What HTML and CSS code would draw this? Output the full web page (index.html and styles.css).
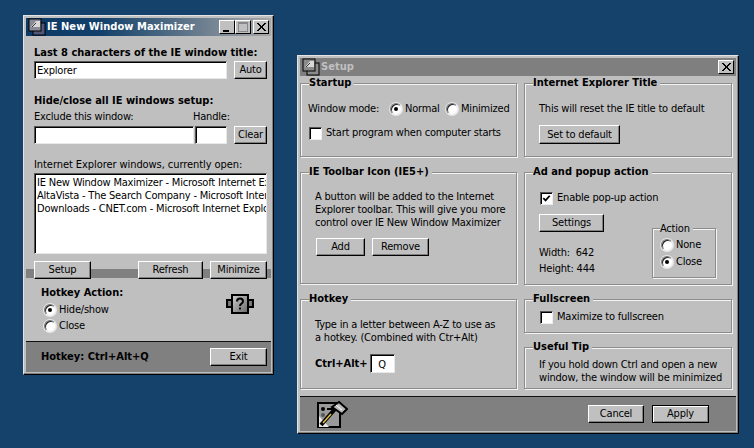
FILE: index.html
```html
<!DOCTYPE html>
<html lang="en">
<head>
<meta charset="utf-8">
<title>IE New Window Maximizer</title>
<link rel="stylesheet" href="styles.css">
</head>
<body>
<section class="win main">
  <header class="title active">
    <svg class="appicon" viewBox="0 0 18 18"><rect x="5" y="5" width="12" height="12" fill="#50587a" stroke="#000"/><rect x="1" y="1" width="12" height="12" fill="#8a8a96" stroke="#000"/><path d="M3 9 8 3h4v6z" fill="#d8d8d8"/><path d="M4 9l4-4" stroke="#333"/></svg>
    <span class="title-text">IE New Window Maximizer</span>
    <span class="ctl"><svg viewBox="0 0 16 14"><rect x="4" y="10" width="6" height="2" fill="#000"/></svg></span>
    <span class="ctl"><svg viewBox="0 0 16 14"><rect x="3.500" y="2.500" width="9" height="9" fill="none" stroke="#888"/><rect x="3" y="2" width="10" height="2" fill="#888"/></svg></span>
    <span class="ctl gap"><svg viewBox="0 0 16 14"><path d="M4 3l8 8M12 3l-8 8M5 3l8 8M13 3l-8 8" stroke="#000" fill="none"/></svg></span>
  </header>
  <div class="main-body">
    <div class="t b l1">Last 8 characters of the IE window title:</div>
    <div class="row r1"><div class="field f-wide">Explorer</div><button class="btn b-side">Auto</button></div>
    <div class="t b l2">Hide/close all IE windows setup:</div>
    <div class="row-labels"><span class="t">Exclude this window:</span><span class="t">Handle:</span></div>
    <div class="row r2"><div class="field f-exclude"></div><div class="field f-handle"></div><button class="btn b-side">Clear</button></div>
    <div class="t l3">Internet Explorer windows, currently open:</div>
    <div class="field list">
      <div>IE New Window Maximizer - Microsoft Internet Explorer</div>
      <div>AltaVista - The Search Company - Microsoft Internet Explorer</div>
      <div>Downloads - CNET.com - Microsoft Internet Explorer</div>
    </div>
  </div>
  <div class="strip">
    <button class="btn b-setup">Setup</button>
    <button class="btn b-refresh">Refresh</button>
    <button class="btn b-min">Minimize</button>
  </div>
  <div class="action">
    <div class="action-left">
      <div class="t b">Hotkey Action:</div>
      <div class="opt o1"><span class="radio on"></span><span class="t">Hide/show</span></div>
      <div class="opt"><span class="radio"></span><span class="t">Close</span></div>
    </div>
    <svg class="chip" viewBox="0 0 28 20"><rect x="1" y="6" width="6" height="7" fill="#777" stroke="#000" stroke-width="2"/><rect x="21" y="6" width="6" height="7" fill="#777" stroke="#000" stroke-width="2"/><defs><linearGradient id="cg" x1="0" y1="0" x2="1" y2="1"><stop offset="0" stop-color="#d0d0d0"/><stop offset="1" stop-color="#666"/></linearGradient></defs><rect x="6" y="1" width="16" height="18" fill="url(#cg)" stroke="#000" stroke-width="2"/><path d="M11 7.500c0-4 6-4 6 0 0 2-3 2-3 4.500" fill="none" stroke="#000" stroke-width="2"/><rect x="13" y="13.500" width="2" height="2" fill="#000"/></svg>
  </div>
  <footer class="foot main-foot">
    <span class="t b">Hotkey: Ctrl+Alt+Q</span>
    <button class="btn b-exit">Exit</button>
  </footer>
</section>

<section class="win setup">
  <header class="title inactive">
    <svg class="appicon" viewBox="0 0 18 18"><rect x="5" y="5" width="12" height="12" fill="#8a8a8a" stroke="#000"/><rect x="1" y="1" width="12" height="12" fill="#8a8a8a" stroke="#000"/><path d="M3 9 8 3h4v6z" fill="#d8d8d8"/><path d="M4 9l4-4" stroke="#333"/></svg>
    <span class="title-text dim">Setup</span>
    <span class="ctl gap"><svg viewBox="0 0 16 14"><path d="M4 3l8 8M12 3l-8 8M5 3l8 8M13 3l-8 8" stroke="#000" fill="none"/></svg></span>
  </header>
  <div class="groups">
    <div class="col">
      <div class="group g-startup">
        <div class="legend t b">Startup</div>
        <div class="mode"><span class="t mode-label">Window mode:</span><span class="radio on"></span><span class="t mode-a">Normal</span><span class="radio"></span><span class="t mode-b">Minimized</span></div>
        <div class="check-row c-start"><span class="check"></span><span class="t">Start program when computer starts</span></div>
      </div>
      <div class="group g-toolbar">
        <div class="legend t b">IE Toolbar Icon (IE5+)</div>
        <p class="t para">A button will be added to the Internet<br>Explorer toolbar. This will give you more<br>control over IE New Window Maximizer</p>
        <div class="btns"><button class="btn b-add">Add</button><button class="btn b-remove">Remove</button></div>
      </div>
      <div class="group g-hotkey">
        <div class="legend t b">Hotkey</div>
        <p class="t para">Type in a letter between A-Z to use as<br>a hotkey. (Combined with Ctr+Alt)</p>
        <div class="combo"><span class="t b">Ctrl+Alt+</span><div class="field f-key">Q</div></div>
      </div>
    </div>
    <div class="col">
      <div class="group g-title">
        <div class="legend t b">Internet Explorer Title</div>
        <p class="t para-r">This will reset the IE title to default</p>
        <button class="btn b-default">Set to default</button>
      </div>
      <div class="group g-ad">
        <div class="legend t b">Ad and popup action</div>
        <div class="check-row c-ad"><span class="check"><svg viewBox="0 0 12 12"><path d="M2.500 5.500 5 8l4.500-5" fill="none" stroke="#000" stroke-width="2"/></svg></span><span class="t">Enable pop-up action</span></div>
        <div class="ad-lower">
          <div class="ad-left">
            <button class="btn b-settings">Settings</button>
            <div class="t dim-line d1">Width:&nbsp; 642</div>
            <div class="t dim-line">Height: 444</div>
          </div>
          <div class="group mini">
            <div class="legend mini-legend t">Action</div>
            <div class="opt o-none"><span class="radio"></span><span class="t">None</span></div>
            <div class="opt o-close"><span class="radio on"></span><span class="t">Close</span></div>
          </div>
        </div>
      </div>
      <div class="group g-full">
        <div class="legend t b">Fullscreen</div>
        <div class="check-row c-full"><span class="check"></span><span class="t">Maximize to fullscreen</span></div>
      </div>
      <div class="group g-tip">
        <div class="legend t b">Useful Tip</div>
        <p class="t para-tip">If you hold down Ctrl and open a new<br>window, the window will be minimized</p>
      </div>
    </div>
  </div>
  <footer class="foot setup-foot">
    <svg class="tools" viewBox="0 0 32 28"><rect x="2" y="3" width="22" height="24" fill="#9a9a9a" stroke="#000" stroke-width="2"/><path d="M3 27V16l10 11z" fill="#e8e8e8"/><circle cx="7" cy="9" r="2" fill="#000"/><path d="M11 9h9" stroke="#000" stroke-width="2"/><circle cx="7" cy="15" r="2" fill="#555"/><path d="M5 25 19 9" stroke="#000" stroke-width="4"/><path d="M7 23 15 14" stroke="#e0c040" stroke-width="1.500"/><path d="M16 7l7-5 8 7-5 5z" fill="#bbb" stroke="#000" stroke-width="2"/><path d="M20 5l6 5" stroke="#fff"/></svg>
    <div class="foot-btns"><button class="btn b-cancel">Cancel</button><button class="btn b-apply">Apply</button></div>
  </footer>
</section>
</body>
</html>
```
FILE: styles.css
```css
html, body { margin: 0; height: 100%; }
body { background: #15426b; overflow: hidden; position: relative; width: 754px; height: 448px; }
.win {
  position: absolute; box-sizing: border-box; background: #bfbfbf; padding: 2px;
  border: 1px solid; border-color: #e4e4e4 #000 #000 #e4e4e4;
  box-shadow: inset -1px -1px 0 #808080;
  display: flex; flex-direction: column;
}
.main { left: 23px; top: 15px; width: 251px; height: 360px; }
.setup { left: 297px; top: 55px; width: 442px; height: 379px; }
.t { font: 11px/14px "DejaVu Sans Condensed", "DejaVu Sans", sans-serif; letter-spacing: -0.2px; color: #000; white-space: nowrap; }
.b { font-weight: bold; letter-spacing: 0; }
.title { height: 18px; flex: none; display: flex; align-items: center; padding: 0 2px; box-sizing: border-box; }
.active { background: linear-gradient(90deg, #0c3a66, #12406a 30%, #a8a8a8 100%); }
.inactive { background: #7f7f7f; }
.appicon { width: 18px; height: 18px; margin-right: 1px; flex: none; }
.title-text { font: bold 11px/16px "DejaVu Sans Condensed", "DejaVu Sans", sans-serif; letter-spacing: 0.05px; color: #fff; flex: 1; white-space: nowrap; }
.title-text.dim { color: #c0c0c0; }
.ctl { width: 16px; height: 14px; box-sizing: border-box; background: #c0c0c0; flex: none; border: 1px solid; border-color: #fff #000 #000 #fff; position: relative; overflow: hidden; display: block; }
.ctl svg { display: block; width: 16px; height: 14px; margin: -1px; }
.gap { margin-left: 2px; }
.btn {
  box-sizing: border-box; height: 18px; padding: 0; background: #c0c0c0; color: #000;
  font: 11px/14px "DejaVu Sans Condensed", "DejaVu Sans", sans-serif; letter-spacing: -0.2px;
  border: 1px solid; border-color: #fff #000 #000 #fff; box-shadow: inset -1px -1px 0 #808080; white-space: nowrap;
}
.field {
  box-sizing: border-box; background: #fff; border: 1px solid; border-color: #555 #e8e8e8 #e8e8e8 #555;
  box-shadow: inset 1px 1px 0 #000; font: 11px/14px "DejaVu Sans Condensed", "DejaVu Sans", sans-serif; letter-spacing: -0.2px; color: #000; padding: 2px 2px; white-space: nowrap; overflow: hidden;
}
.main-body { padding: 0 4px 0 8px; }
.l1 { margin-top: 10px; }
.r1, .r2 { display: flex; margin-top: 1px; }
.r2 { margin-top: 2px; }
.f-wide { width: 193px; height: 18px; margin-right: 7px; }
.b-side { width: 33px; }
.l2 { margin-top: 15px; }
.row-labels { display: flex; margin-top: 2px; }
.row-labels span:first-child { width: 159px; }
.f-exclude { width: 160px; height: 18px; margin-right: 1px; }
.f-handle { width: 32px; height: 18px; margin-right: 7px; }
.l3 { margin-top: 14px; letter-spacing: -0.07px; }
.list { margin-top: 1px; width: 233px; height: 81px; padding: 2px 0 0 2px; line-height: 13px; }
.strip { display: flex; margin-top: 7px; padding: 0 4px 0 8px; height: 18px; background: linear-gradient(#0000 8px, #808080 8px, #808080 17px, #0000 17px); }
.b-setup { width: 57px; margin-right: 47px; }
.b-refresh { width: 65px; margin-right: 7px; }
.b-min { width: 57px; }
.action { display: flex; height: 62px; padding: 7px 0 0 15px; box-sizing: border-box; position: relative; }
.action-left { flex: 1; }
.opt { display: flex; align-items: center; height: 16px; }
.o1 { margin-top: 2px; }
.radio { flex: none; width: 12px; height: 12px; box-sizing: border-box; border-radius: 50%; background: #fff; border: 1px solid; border-color: #777 #eee #eee #777; box-shadow: inset 1px 1px 0 #222, 0 0 0 1px #e8e8e8; position: relative; margin: 0 3px; }
.radio.on::after { content: ""; position: absolute; left: 3px; top: 3px; width: 4px; height: 4px; background: #000; border-radius: 50%; }
.chip { width: 28px; height: 20px; margin: 8px 17px 0 0; flex: none; }
.foot { flex: none; box-sizing: border-box; background: #808080; border-top: 1px solid #111; display: flex; align-items: center; }
.main-foot { height: 31px; padding: 0 4px 0 15px; justify-content: space-between; }
.b-exit { width: 57px; }
.groups { display: grid; grid-template-columns: 217px 208px; column-gap: 7px; flex: 1; padding-top: 7px; align-items: start; }
.col { display: flex; flex-direction: column; }
.group { box-sizing: border-box; border: 1px solid #8c8c8c; box-shadow: inset 1px 1px 0 #f4f4f4, 1px 1px 0 #f4f4f4; }
.legend { display: table; background: #bfbfbf; margin: -8px 0 0 8px; padding: 0 3px 0 0; height: 14px; }
.g-startup { height: 74px; }
.g-toolbar { height: 112px; margin-top: 15px; }
.g-hotkey { height: 90px; margin-top: 15px; }
.g-title { height: 74px; }
.g-ad { height: 113px; margin-top: 15px; }
.g-full { height: 34px; margin-top: 14px; }
.g-tip { height: 42px; margin-top: 14px; }
.mode { display: flex; align-items: center; margin: 12px 0 0 7px; }
.mode-label { width: 82px; }
.mode .radio { margin: 0 3px 0 0; }
.mode-a { width: 41px; }
.check-row { display: flex; align-items: center; }
.check { flex: none; width: 13px; height: 13px; box-sizing: border-box; background: #fff; border: 1px solid; border-color: #555 #eee #eee #555; box-shadow: inset 1px 1px 0 #000; margin-right: 4px; }
.check svg { display: block; width: 11px; height: 11px; }
.c-start { margin: 10px 0 0 8px; }
.para { margin: 12px 0 0 14px; line-height: 13px; }
.g-toolbar .para { margin-top: 11px; }
.btns { display: flex; margin: 9px 0 0 15px; }
.b-add { width: 49px; margin-right: 7px; }
.b-remove { width: 57px; }
.combo { display: flex; align-items: center; margin: 10px 0 0 14px; }
.f-key { width: 25px; height: 19px; text-align: center; margin-left: 2px; padding-top: 3px; }
.para-r { margin: 12px 0 0 14px; }
.b-default { display: block; width: 81px; height: 19px; margin: 9px 0 0 14px; }
.c-ad { margin: 12px 0 0 15px; }
.ad-lower { display: flex; justify-content: space-between; padding: 0 15px 0 14px; }
.b-settings { display: block; width: 65px; margin-top: 9px; }
.dim-line { margin-top: 2px; }
.d1 { margin-top: 14px; }
.mini { width: 64px; height: 50px; margin-top: 23px; }
.mini-legend { margin: -7px 0 0 7px; }
.mini .opt { margin-left: 5px; }
.o-none { margin-top: 1px; }
.o-close { margin-top: 1px; }
.c-full { margin: 4px 0 0 15px; }
.para-tip { margin: 4px 0 0 14px; line-height: 13px; }
.setup-foot { height: 35px; padding: 0 27px 0 16px; justify-content: space-between; }
.tools { width: 32px; height: 28px; flex: none; }
.foot-btns { display: flex; gap: 8px; }
.b-cancel { width: 56px; }
.b-apply { width: 57px; border: 1px solid #000; box-shadow: inset 1px 1px 0 #fff, inset -1px -1px 0 #808080; }
```
